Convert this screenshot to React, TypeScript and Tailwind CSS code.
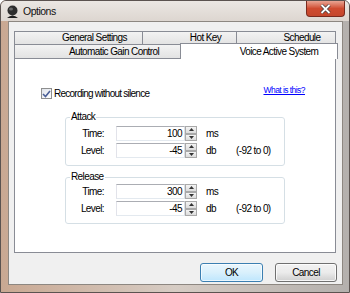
export default function App() {
  const font = "font-['Liberation_Sans',Arial,sans-serif] tracking-[-0.6px]";

  return (
    <div
      className={`${font} relative h-[293px] w-[350px] overflow-hidden rounded-t-[6px] border border-[#5b5350] bg-gradient-to-r from-[#c9a892] via-[#d6ccc4] to-[#b4b0ad] text-[10px] text-black`}
    >
      {/* title bar */}
      <div className="flex h-[20px] items-center bg-gradient-to-b from-[#ebe7e3] to-[#ddd6d0] pl-[5px]">
        <WindowIcon />
        <span className="ml-[4px] text-[10.5px] leading-none tracking-[-0.5px] text-[#111]">
          Options
        </span>
      </div>
      <CloseButton />

      {/* client area */}
      <div className="ml-[7px] mr-[6px] flex h-[264px] flex-col border border-[#8d8781] bg-[#f0f0f0]">
        <div className="ml-[5px] mr-[6px] mt-[9px]">
          {/* tab rows */}
          <div className="flex h-[14px]">
            <Tab label="General Settings" className="w-[129px]" />
            <Tab label="Hot Key" className="-ml-px w-[95px]" />
            <Tab label="Schedule" className="-ml-px w-[100px]" />
          </div>
          <div className="flex h-[13px] items-end">
            <Tab label="Automatic Gain Control" className="h-[13px] w-[168px] border-b-0" />
            <div className="relative z-10 -mb-px -ml-[2px] -mr-[2px] flex h-[16px] flex-1 items-center justify-center border border-b-0 border-[#898c95] bg-white pl-[40px] leading-none">
              Voice Active System
            </div>
          </div>

          {/* panel */}
          <div className="h-[195px] border border-[#898c95] bg-white">
            <div className="flex items-start justify-between pl-[26px] pr-[30px] pt-[29px]">
              <label className="flex items-center gap-[2px] leading-none">
                <Checkbox />
                <span className="tracking-[-0.75px]">Recording without silence</span>
              </label>
              <a className="-mt-[4px] text-[8.5px] tracking-[-0.55px] text-[#0000ff] underline">
                What is this?
              </a>
            </div>

            <Group title="Attack" className="mt-[12px] pt-[3px]" time="100" level="-45" />
            <Group title="Release" className="mt-[5px] pt-[1px]" time="300" level="-45" />
          </div>
        </div>

        {/* buttons */}
        <div className="mr-[5px] mt-[10px] flex justify-end gap-[12px]">
          <button className="flex h-[19px] w-[63px] items-center justify-center rounded-[3px] border border-[#3c7fb1] bg-gradient-to-b from-[#eaf6fd] via-[#d9f0fc] to-[#bee6fd] leading-none shadow-[inset_0_0_0_1px_#ffffffaa]">
            OK
          </button>
          <button className="flex h-[19px] w-[62px] items-center justify-center rounded-[3px] border border-[#707070] bg-gradient-to-b from-[#f2f2f2] via-[#ebebeb] to-[#cfcfcf] leading-none shadow-[inset_0_0_0_1px_#ffffffcc]">
            Cancel
          </button>
        </div>
      </div>
    </div>
  );
}

function Tab({ label, className = "" }: { label: string; className?: string }) {
  return (
    <div
      className={`flex h-[14px] items-center justify-center border border-[#898c95] bg-gradient-to-b from-[#f3f3f3] to-[#e3e3e3] pl-[32px] leading-none ${className}`}
    >
      {label}
    </div>
  );
}

function Group({
  title,
  time,
  level,
  className = "",
}: {
  title: string;
  time: string;
  level: string;
  className?: string;
}) {
  return (
    <fieldset
      className={`ml-[50px] w-[220px] rounded-[3px] border border-[#d5dfe5] pb-[7px] ${className}`}
    >
      <legend className="ml-[4px] px-[1px] leading-[12px]">{title}</legend>
      <div className="flex flex-col gap-[2px]">
        <Row label="Time:" value={time} unit="ms" />
        <Row label="Level:" value={level} unit="db" note="(-92 to 0)" />
      </div>
    </fieldset>
  );
}

function Row({
  label,
  value,
  unit,
  note,
}: {
  label: string;
  value: string;
  unit: string;
  note?: string;
}) {
  return (
    <div className="flex h-[15px] items-center">
      <span className="w-[38px] text-right">{label}</span>
      <div className="ml-[12px] flex h-[15px] w-[69px] items-center justify-end border border-[#abadb3] border-b-[#e3e9ef] border-l-[#e2e3ea] border-r-[#dbdfe6] bg-white pr-[2px] leading-none">
        {value}
      </div>
      <Spinner />
      <span className="ml-[9px] w-[30px]">{unit}</span>
      {note && <span>{note}</span>}
    </div>
  );
}

function Spinner() {
  return (
    <div className="flex h-[15px] w-[12px] flex-col">
      {[0, 1].map((i) => (
        <div
          key={i}
          className="flex h-[7.5px] items-center justify-center border border-[#a9a9a9] bg-gradient-to-b from-[#f4f4f4] to-[#dcdcdc]"
        >
          <svg width="5" height="3" viewBox="0 0 5 3">
            {i === 0 ? (
              <path d="M0 3 L2.5 0 L5 3 Z" fill="#333" />
            ) : (
              <path d="M0 0 L2.5 3 L5 0 Z" fill="#333" />
            )}
          </svg>
        </div>
      ))}
    </div>
  );
}

function Checkbox() {
  return (
    <span className="flex h-[11px] w-[11px] items-center justify-center border border-[#8e8f8f] bg-gradient-to-br from-[#dfe3ea] to-[#ffffff]">
      <svg width="9" height="8" viewBox="0 0 9 8">
        <path d="M1 4 L3.5 6.5 L8 1" fill="none" stroke="#4a5f97" strokeWidth="1.6" />
      </svg>
    </span>
  );
}

function WindowIcon() {
  return (
    <svg width="13" height="13" viewBox="0 0 13 13">
      <ellipse cx="6.5" cy="5.5" rx="5" ry="5" fill="#2d2d2d" />
      <ellipse cx="5" cy="4" rx="2" ry="1.6" fill="#6a6a6a" />
      <path d="M1 13 Q6.5 8 12 13 Z" fill="#1f1f1f" />
    </svg>
  );
}

function CloseButton() {
  return (
    <div className="absolute right-[4px] top-0 flex h-[16px] w-[39px] items-center justify-center rounded-b-[4px] border border-t-0 border-[#7a2a1e] bg-gradient-to-b from-[#e8a493] via-[#cf4b30] to-[#c4472c]">
      <svg width="11" height="10" viewBox="0 0 11 10">
        <path d="M1.5 1 L9.5 9 M9.5 1 L1.5 9" stroke="#3a3a3a" strokeWidth="3.2" />
        <path d="M1.5 1 L9.5 9 M9.5 1 L1.5 9" stroke="#ffffff" strokeWidth="1.8" />
      </svg>
    </div>
  );
}
